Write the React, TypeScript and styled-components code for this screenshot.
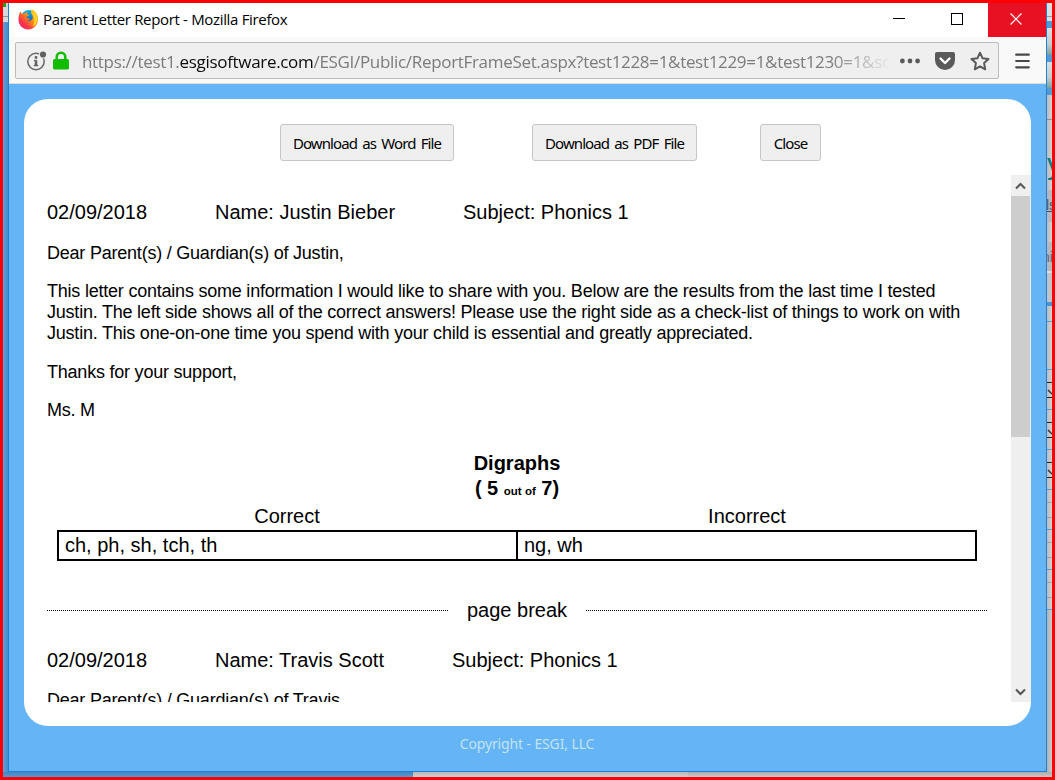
import React from "react";
import styled, { createGlobalStyle } from "styled-components";

const GlobalStyle = createGlobalStyle`
  * { box-sizing: border-box; }
  html, body { margin: 0; overflow: hidden; }
  p, h1, h2 { margin: 0; font-weight: normal; }
`;

const ui = `"Open Sans", "Noto Sans", sans-serif`;
const tahoma = `"Noto Sans", "Open Sans", sans-serif`;
const arial = `"Liberation Sans", Arial, sans-serif`;

const Desktop = styled.div`
  width: 1055px;
  height: 780px;
  border: 3px solid #ff0000;
  display: grid;
  grid-template-columns: 5px 1039px 5px;
  grid-template-rows: 769px 5px;
  overflow: hidden;
  background: #cfcfcf;
`;

const Strip = styled.div`
  display: flex;
  flex-direction: column;
  overflow: hidden;
`;

const Band = styled.div<{ $h: number; $bg: string }>`
  flex: none;
  height: ${(p) => p.$h}px;
  background: ${(p) => p.$bg};
  overflow: hidden;
`;

const Peek = styled.span<{ $size: number; $color: string; $line?: boolean; $shift: number }>`
  display: block;
  white-space: nowrap;
  font: ${(p) => p.$size}px/1 ${arial};
  color: ${(p) => p.$color};
  margin-left: ${(p) => p.$shift}px;
  text-decoration: ${(p) => (p.$line ? "underline" : "none")};
`;

const BottomStrip = styled.div`
  grid-column: 1 / -1;
  display: flex;
`;

const BottomPart = styled.div<{ $w: number; $bg: string }>`
  width: ${(p) => p.$w}px;
  background: ${(p) => p.$bg};
`;

const Window = styled.section`
  display: flex;
  flex-direction: column;
  border: solid #1d82d4;
  border-width: 0 1px 1px;
  background: #64b4f6;
  overflow: hidden;
`;

const TitleBar = styled.header`
  flex: none;
  height: 34px;
  background: #fff;
  display: flex;
  align-items: center;
  padding-left: 9px;
`;

const WindowTitle = styled.h1`
  flex: 1;
  margin: 0 0 2px 4px;
  font: 15px/20px ${ui};
  letter-spacing: -0.33px;
  color: #000;
  white-space: nowrap;
`;

const Control = styled.button<{ $danger?: boolean }>`
  width: 58px;
  height: 34px;
  padding: ${(p) => (p.$danger ? "0 2px 2px 0" : "0 4px 2px 0")};
  border: 0;
  background: ${(p) => (p.$danger ? "#e81123" : "transparent")};
  display: grid;
  place-items: center;
`;

const Toolbar = styled.div`
  flex: none;
  height: 47px;
  background: #f9f9f9;
  border-bottom: 1px solid #dcdcdc;
  padding: 5px 16px 4px 6px;
  display: flex;
  justify-content: space-between;
  align-items: center;
`;

const AddressBar = styled.div`
  width: 984px;
  height: 37px;
  border: 1px solid #bbb;
  border-radius: 2px;
  background: #efefef;
  display: flex;
  align-items: center;
  padding: 0 8px 0 11px;
`;

const Address = styled.div`
  margin: 2px 0 0 13px;
  width: 807px;
  overflow: hidden;
  white-space: nowrap;
  font: 17px/30px ${ui};
  letter-spacing: -0.315px;
  color: #7b7b7b;
  mask-image: linear-gradient(to right, #000 748px, transparent 810px);
`;

const Host = styled.span`
  color: #0c0c0c;
`;

const Actions = styled.div`
  display: flex;
  align-items: center;
  margin-left: auto;
`;

const Page = styled.main`
  flex: 1;
  display: flex;
  flex-direction: column;
  padding: 15px 15px 0;
`;

const Card = styled.div`
  flex: none;
  height: 627px;
  border-radius: 24px;
  background: #fff;
  display: flex;
  flex-direction: column;
`;

const ButtonRow = styled.div`
  height: 76px;
  padding: 25px 0 0 256px;
  display: flex;
`;

const ActionButton = styled.button<{ $w: number; $gap?: number }>`
  width: ${(p) => p.$w}px;
  height: 37px;
  margin-right: ${(p) => p.$gap ?? 0}px;
  padding: 0;
  border: 1px solid #c6c6c6;
  border-radius: 3px;
  background: #efefef;
  font: 15px/20px ${tahoma};
  letter-spacing: -0.9px;
  word-spacing: 2.2px;
  color: #000;
  white-space: nowrap;
`;

const Viewport = styled.div`
  height: 527px;
  display: flex;
  overflow: hidden;
`;

const Report = styled.article`
  width: 987px;
  padding: 23px 24px 0 23px;
  overflow: hidden;
  font-family: ${arial};
  color: #000;
`;

const Heading = styled.h2<{ $second: number; $third: number }>`
  display: grid;
  grid-template-columns: ${(p) => p.$second}px ${(p) => p.$third}px auto;
  font-size: 20px;
  line-height: 28px;
  white-space: nowrap;
`;

const Paragraph = styled.p<{ $top: number }>`
  margin-top: ${(p) => p.$top}px;
  font-size: 18px;
  line-height: 21px;
  letter-spacing: -0.22px;
  white-space: nowrap;
`;

const TestTitle = styled.div`
  margin-top: 30px;
  font-size: 20px;
  line-height: 25px;
  font-weight: bold;
  text-align: center;
`;

const OutOf = styled.span`
  font-size: 11.5px;
`;

const ColumnHeads = styled.div`
  margin: -2px 10px 0;
  display: grid;
  grid-template-columns: 1fr 1fr;
  font-size: 20px;
  line-height: 28px;
  text-align: center;
`;

const Results = styled.div`
  margin: 0 10px;
  height: 31px;
  border: 2px solid #000;
  display: grid;
  grid-template-columns: 457px 1fr;
  font-size: 20px;
  line-height: 27px;
`;

const Answer = styled.div`
  padding-left: 6px;
  & + & { border-left: 2px solid #000; }
`;

const PageBreak = styled.div`
  margin: 35px 0 22px;
  display: flex;
  align-items: center;
  justify-content: space-between;
  font-size: 20px;
  line-height: 28px;
`;

const Dots = styled.span`
  width: 401px;
  border-top: 1px dotted #000;
`;

const Scrollbar = styled.div`
  width: 20px;
  background: #efefef;
  display: flex;
  flex-direction: column;
`;

const ScrollArrow = styled.div`
  height: 21px;
  padding-left: 4px;
  display: flex;
  align-items: center;
`;

const Thumb = styled.div`
  width: 19px;
  height: 241px;
  margin-bottom: auto;
  background: #cdcdcd;
`;

const Footer = styled.footer`
  text-align: center;
  padding: 8px 0 0;
  width: 1006px;
  font: 14px/20px ${tahoma};
  letter-spacing: -0.13px;
  color: #c3e3f0;
`;

const FirefoxLogo = () => (
  <svg width="21" height="21" viewBox="0 0 21 21" style={{ marginBottom: 2 }}>
    <defs>
      <linearGradient id="flame" x1="1" y1="0" x2="0" y2="1">
        <stop offset="0" stopColor="#ffe226" />
        <stop offset=".4" stopColor="#ff980e" />
        <stop offset=".7" stopColor="#ff3647" />
        <stop offset="1" stopColor="#e31587" />
      </linearGradient>
      <linearGradient id="globe" x1="0" y1="0" x2="0" y2="1">
        <stop offset="0" stopColor="#00b4ea" />
        <stop offset="1" stopColor="#2b3f9e" />
      </linearGradient>
    </defs>
    <circle cx="11" cy="9" r="8" fill="url(#globe)" />
    <path d="M2.5 2.5 4 5c1-.8 2-1 3-.8 1-1 2-1.600 3-1.800-.9.9-1.200 1.900-1 2.800l2 .6c.3.600-.4 1.200-1.800 1.800l-.5 1.700c1 .4 2-.2 3.300.4-.4 1.300-1.700 1.900-3 1.800 2.700 1.500 5.600-.2 5.800-3 .1-2.500-2-3.500-2-5.500 0-1 .6-1.900 1.700-2.500 3.200 1.600 5.500 5 5.500 9.500 0 6-4.300 10.500-9.700 10.500S.5 16 .5 10.700c0-3.400.5-6 2-8.200Z" fill="url(#flame)" />
    <path d="M15 2c3 2.500 4.500 5 4 9-.3 3.500-2 5.500-4.500 6.500 2-3 2.300-5.500 1.500-8 0-3-2-4-1-7.500Z" fill="#ffd52b" />
  </svg>
);

const InfoIcon = () => (
  <svg width="20" height="20" viewBox="0 0 20 20">
    <circle cx="9" cy="10.500" r="8.200" fill="none" stroke="#666" strokeWidth="1.500" />
    <circle cx="9" cy="6.500" r="1.400" fill="#606060" />
    <path d="M7 9.200h3v4.800h1v1H7v-1h1v-4H7z" fill="#606060" stroke="#606060" strokeWidth=".5" />
    <circle cx="16" cy="3.500" r="4" fill="#efefef" />
    <circle cx="16" cy="3.500" r="3.100" fill="#606060" />
  </svg>
);

const LockIcon = () => (
  <svg width="16" height="19" viewBox="0 0 16 19" style={{ marginLeft: 6 }}>
    <path d="M3.700 10V6a4.300 4.300 0 0 1 8.600 0v4" fill="none" stroke="#12bc00" strokeWidth="2.500" />
    <rect x="0" y="8" width="16" height="10.500" rx="1.500" fill="#12bc00" />
  </svg>
);

const DotsIcon = () => (
  <svg width="20" height="6" viewBox="0 0 20 6" fill="#5a5a5a">
    <circle cx="2.400" cy="3" r="2.400" />
    <circle cx="10" cy="3" r="2.400" />
    <circle cx="17.600" cy="3" r="2.400" />
  </svg>
);

const PocketIcon = () => (
  <svg width="20" height="18" viewBox="0 0 20 18" style={{ marginLeft: 15 }}>
    <path d="M2 0h16a2 2 0 0 1 2 2v6a10 10 0 0 1-20 0V2a2 2 0 0 1 2-2Z" fill="#5a5a5a" />
    <path d="m5.500 6.500 4.500 4.500 4.500-4.500" fill="none" stroke="#fff" strokeWidth="2.400" strokeLinecap="round" strokeLinejoin="round" />
  </svg>
);

const StarIcon = () => (
  <svg width="20" height="20" viewBox="0 0 20 20" style={{ marginLeft: 15 }}>
    <path d="m10 1.700 2.500 5.500 6 .7-4.400 4.100 1.100 6.300-5.200-3-5.200 3 1.100-6.300L1.500 7.900l6-.7Z" fill="none" stroke="#5a5a5a" strokeWidth="2" strokeLinejoin="round" />
  </svg>
);

const MenuIcon = () => (
  <svg width="15" height="16" viewBox="0 0 15 16" stroke="#484848" strokeWidth="2.200" strokeLinecap="round">
    <path d="M1.200 1.700h12.600M1.200 8h12.600M1.200 14.300h12.600" />
  </svg>
);

const Chevron = ({ down }: { down?: boolean }) => (
  <svg width="11" height="8" viewBox="0 0 11 8" fill="none" stroke="#555" strokeWidth="2">
    <path d={down ? "m1 1.500 4.500 4.500L10 1.500" : "m1 6.500 4.500-4.500L10 6.500"} />
  </svg>
);

const grey = "linear-gradient(to right,#bcbaba,#d6d2d2)";
const blue = "#5599d3";
const photo = "linear-gradient(#dedede,#c5cccb 60%,#7f9f99)";

type BandSpec = { h: number; bg: string; peek?: React.ReactNode };

const tick = (
  <svg width="5" height="14" viewBox="0 0 5 14" fill="none" stroke="#333" strokeWidth="1.500" style={{ display: "block" }}>
    <path d="M1 7l4 4" />
  </svg>
);

const tableRow = (line: string, marked: boolean): BandSpec[] => [
  { h: 1, bg: blue },
  { h: 12, bg: grey },
  { h: 1, bg: line },
  { h: 14, bg: grey, peek: marked ? tick : undefined },
  { h: 1, bg: line },
  { h: 11, bg: grey },
];

const rightBands: BandSpec[] = [
  { h: 13, bg: "#dedede" },
  { h: 1, bg: "#999" },
  { h: 4, bg: "#dedede" },
  { h: 7, bg: blue },
  { h: 27, bg: photo },
  { h: 7, bg: blue },
  { h: 26, bg: photo },
  { h: 7, bg: blue },
  { h: 24, bg: grey },
  { h: 1, bg: "#8c8c8c" },
  { h: 30, bg: grey },
  { h: 30, bg: grey, peek: <Peek $size={29} $color="#087c80" $shift={0}>y</Peek> },
  { h: 10, bg: grey },
  { h: 8, bg: "#b9b7b9" },
  { h: 24, bg: "#b9b7b9", peek: <Peek $size={14} $color="#4c5365" $shift={-1} $line>ls</Peek> },
  { h: 20, bg: grey },
  { h: 8, bg: "#b9b7b9" },
  { h: 21, bg: "#b9b7b9", peek: <Peek $size={14} $color="#686270" $shift={-5}>ni</Peek> },
  { h: 2, bg: "#dedede" },
  { h: 29, bg: "#c4c2c3" },
  { h: 4, bg: "#4b94d2" },
  { h: 15, bg: grey },
  { h: 1, bg: blue },
  { h: 47, bg: grey },
  ...tableRow("#222", true),
  ...tableRow("#222", true),
  ...tableRow("#222", true),
  ...tableRow("#a19f9f", false),
  ...tableRow("#a19f9f", false),
  ...tableRow("#a19f9f", false),
  { h: 1, bg: blue },
  { h: 170, bg: "linear-gradient(to right,#b0b0b0,#cdcdcd)" },
];

const leftBands: BandSpec[] = [
  { h: 4, bg: "linear-gradient(to right,#16a916 70%,#cdd8d4 70%)" },
  { h: 9, bg: "#d5dadd" },
  { h: 1, bg: "#8f9498" },
  { h: 5, bg: "#d5dadd" },
  { h: 750, bg: "linear-gradient(to right,#5aa2df,#4a8cc6)" },
];

const Bands = ({ items }: { items: BandSpec[] }) => (
  <Strip>
    {items.map((b, i) => (
      <Band key={i} $h={b.h} $bg={b.bg}>{b.peek}</Band>
    ))}
  </Strip>
);

export default function App() {
  return (
    <>
      <GlobalStyle />
      <Desktop>
        <Bands items={leftBands} />
        <Window>
          <TitleBar>
            <FirefoxLogo />
            <WindowTitle>Parent Letter Report - Mozilla Firefox</WindowTitle>
            <Control aria-label="Minimize">
              <svg width="12" height="12"><path d="M0 5.500h12" stroke="#000" /></svg>
            </Control>
            <Control aria-label="Maximize">
              <svg width="12" height="12"><rect x=".5" y=".5" width="11" height="11" fill="none" stroke="#000" /></svg>
            </Control>
            <Control $danger aria-label="Close window">
              <svg width="12" height="12"><path d="m.5.500 11 11m0-11-11 11" stroke="#fff" strokeWidth="1.200" /></svg>
            </Control>
          </TitleBar>
          <Toolbar>
            <AddressBar>
              <InfoIcon />
              <LockIcon />
              <Address>
                https://test1.<Host>esgisoftware.com</Host>/ESGI/Public/ReportFrameSet.aspx?test1228=1&amp;test1229=1&amp;test1230=1&amp;sc
              </Address>
              <Actions>
                <DotsIcon />
                <PocketIcon />
                <StarIcon />
              </Actions>
            </AddressBar>
            <MenuIcon />
          </Toolbar>
          <Page>
            <Card>
              <ButtonRow>
                <ActionButton $w={174} $gap={78}>Download as Word File</ActionButton>
                <ActionButton $w={165} $gap={63}>Download as PDF File</ActionButton>
                <ActionButton $w={61}>Close</ActionButton>
              </ButtonRow>
              <Viewport>
                <Report>
                  <Heading $second={168} $third={248}>
                    <span>02/09/2018</span>
                    <span>Name: Justin Bieber</span>
                    <span>Subject: Phonics 1</span>
                  </Heading>
                  <Paragraph $top={17}>Dear Parent(s) / Guardian(s) of Justin,</Paragraph>
                  <Paragraph $top={17}>
                    This letter contains some information I would like to share with you. Below are the results from the last time I tested<br />
                    Justin. The left side shows all of the correct answers! Please use the right side as a check-list of things to work on with<br />
                    Justin. This one-on-one time you spend with your child is essential and greatly appreciated.
                  </Paragraph>
                  <Paragraph $top={18}>Thanks for your support,</Paragraph>
                  <Paragraph $top={17}>Ms. M</Paragraph>
                  <TestTitle>
                    Digraphs<br />( 5 <OutOf>out of</OutOf> 7)
                  </TestTitle>
                  <ColumnHeads>
                    <span>Correct</span>
                    <span>Incorrect</span>
                  </ColumnHeads>
                  <Results>
                    <Answer>ch, ph, sh, tch, th</Answer>
                    <Answer>ng, wh</Answer>
                  </Results>
                  <PageBreak>
                    <Dots />
                    page break
                    <Dots />
                  </PageBreak>
                  <Heading $second={168} $third={237}>
                    <span>02/09/2018</span>
                    <span>Name: Travis Scott</span>
                    <span>Subject: Phonics 1</span>
                  </Heading>
                  <Paragraph $top={16}>Dear Parent(s) / Guardian(s) of Travis,</Paragraph>
                </Report>
                <Scrollbar>
                  <ScrollArrow><Chevron /></ScrollArrow>
                  <Thumb />
                  <ScrollArrow><Chevron down /></ScrollArrow>
                </Scrollbar>
              </Viewport>
            </Card>
            <Footer>Copyright - ESGI, LLC</Footer>
          </Page>
        </Window>
        <Bands items={rightBands} />
        <BottomStrip>
          <BottomPart $w={410} $bg="linear-gradient(#4587c2,#5498d2)" />
          <BottomPart $w={275} $bg="linear-gradient(#b8b8b8,#d0d0d0)" />
          <BottomPart $w={364} $bg="linear-gradient(#adadad,#c8c8c8)" />
        </BottomStrip>
      </Desktop>
    </>
  );
}
